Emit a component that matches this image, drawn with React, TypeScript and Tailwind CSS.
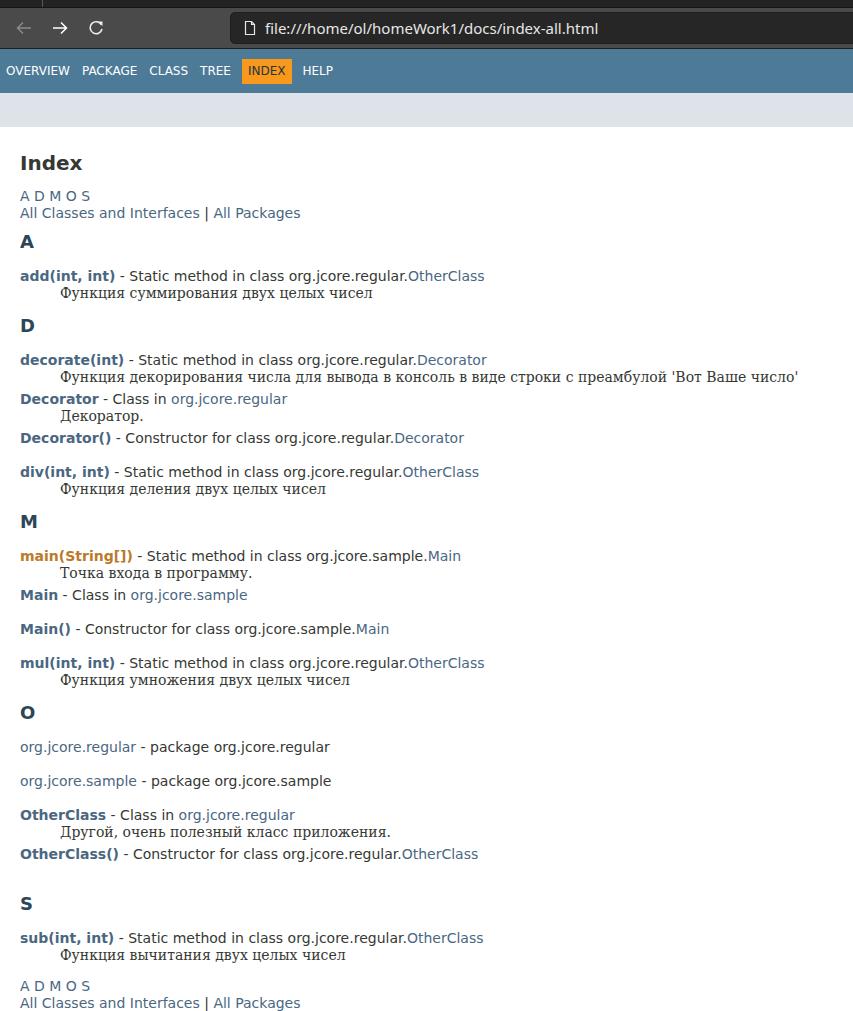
import React from "react";

const sans = "font-['DejaVu_Sans',_'Liberation_Sans',_sans-serif]";
const serif = "font-['DejaVu_Serif',_'Liberation_Serif',_serif]";

type Entry = {
  name: string;
  text: string;
  link?: string;
  desc?: string;
  lead?: "pkg";
  hot?: boolean;
};

const sections: { letter: string; extra?: string; items: Entry[] }[] = [
  {
    letter: "A",
    items: [
      {
        name: "add(int, int)",
        text: " - Static method in class org.jcore.regular.",
        link: "OtherClass",
        desc: "Функция суммирования двух целых чисел",
      },
    ],
  },
  {
    letter: "D",
    items: [
      {
        name: "decorate(int)",
        text: " - Static method in class org.jcore.regular.",
        link: "Decorator",
        desc: "Функция декорирования числа для вывода в консоль в виде строки с преамбулой 'Вот Ваше число'",
      },
      { name: "Decorator", text: " - Class in ", link: "org.jcore.regular", desc: "Декоратор." },
      { name: "Decorator()", text: " - Constructor for class org.jcore.regular.", link: "Decorator" },
      {
        name: "div(int, int)",
        text: " - Static method in class org.jcore.regular.",
        link: "OtherClass",
        desc: "Функция деления двух целых чисел",
      },
    ],
  },
  {
    letter: "M",
    items: [
      {
        name: "main(String[])",
        text: " - Static method in class org.jcore.sample.",
        link: "Main",
        desc: "Точка входа в программу.",
        hot: true,
      },
      { name: "Main", text: " - Class in ", link: "org.jcore.sample" },
      { name: "Main()", text: " - Constructor for class org.jcore.sample.", link: "Main" },
      {
        name: "mul(int, int)",
        text: " - Static method in class org.jcore.regular.",
        link: "OtherClass",
        desc: "Функция умножения двух целых чисел",
      },
    ],
  },
  {
    letter: "O",
    items: [
      { name: "org.jcore.regular", text: " - package org.jcore.regular", lead: "pkg" },
      { name: "org.jcore.sample", text: " - package org.jcore.sample", lead: "pkg" },
      {
        name: "OtherClass",
        text: " - Class in ",
        link: "org.jcore.regular",
        desc: "Другой, очень полезный класс приложения.",
      },
      { name: "OtherClass()", text: " - Constructor for class org.jcore.regular.", link: "OtherClass" },
    ],
  },
  {
    letter: "S",
    extra: "mt-[10px]",
    items: [
      {
        name: "sub(int, int)",
        text: " - Static method in class org.jcore.regular.",
        link: "OtherClass",
        desc: "Функция вычитания двух целых чисел",
      },
    ],
  },
];

const LetterBar = () => (
  <div className="leading-[17px]">
    <div className="text-[#4a6782]">A D M O S</div>
    <div>
      <span className="text-[#4a6782]">All Classes and Interfaces</span> |{" "}
      <span className="text-[#4a6782]">All Packages</span>
    </div>
  </div>
);

const Row = ({ e }: { e: Entry }) => (
  <div>
    <div className="h-[17px] leading-[17px] whitespace-nowrap">
      {e.lead === "pkg" ? (
        <span className="text-[#4a6782]">{e.name}</span>
      ) : (
        <span className={e.hot ? "font-bold text-[#bb7a2a]" : "font-bold text-[#4a6782]"}>{e.name}</span>
      )}
      {e.text}
      {e.link && <span className="text-[#4a6782]">{e.link}</span>}
    </div>
    {e.desc ? (
      <div className={`${serif} ml-10 mb-[5px] h-[17px] leading-[17px] whitespace-nowrap`}>{e.desc}</div>
    ) : (
      <div className="h-[17px]" />
    )}
  </div>
);

export default function App() {
  return (
    <div className={`${sans} w-[853px] h-[1011px] overflow-hidden bg-white text-[14px] text-[#353833]`}>
      {/* browser chrome */}
      <div className="h-[7px] bg-[#232323] flex">
        <div className="ml-[42px] w-px bg-[#555]" />
      </div>
      <div className="h-px bg-[#151515]" />
      <div className="h-[40px] bg-[#4a4a4a] flex items-center pl-[14px] font-['Noto_Sans',_sans-serif]">
        <svg width="20" height="20" viewBox="0 0 20 20" className="text-[#8a8a8a]">
          <path d="M17 10H4M9 4.5L3.5 10 9 15.5" fill="none" stroke="currentColor" strokeWidth="1.5" />
        </svg>
        <svg width="20" height="20" viewBox="0 0 20 20" className="ml-[16px] text-white">
          <path d="M3 10h13M11 4.5l5.5 5.5-5.5 5.5" fill="none" stroke="currentColor" strokeWidth="1.5" />
        </svg>
        <svg width="20" height="20" viewBox="0 0 20 20" className="ml-[16px] text-[#eee]">
          <path d="M15.5 7A6 6 0 1 0 16 11" fill="none" stroke="currentColor" strokeWidth="1.6" />
          <path d="M12 3.5h4.5V8z" fill="currentColor" />
        </svg>
        <div className="ml-[124px] h-[32px] flex-1 -mr-[10px] rounded-[5px] bg-[#262626] border border-[#1e1e1e] flex items-center pl-[11px]">
          <svg width="16" height="16" viewBox="0 0 16 16" className="text-[#e8e8e8]">
            <path d="M3.5 1.5h6l3 3v10h-9z M9.5 1.5v3h3" fill="none" stroke="currentColor" strokeWidth="1.2" />
          </svg>
          <span className="ml-[7px] text-[15px] text-[#e6e6e6]">
            file:///home/ol/homeWork1/docs/index-all.html
          </span>
        </div>
      </div>
      <div className="h-px bg-[#1e1e1e]" />

      {/* javadoc nav */}
      <div className="h-[44px] bg-[#4d7a97] pt-[10px] pl-0">
        <ul className="flex text-[12px] leading-[15px] text-white">
          {["Overview", "Package", "Class", "Tree", "Index", "Help"].map((n) => (
            <li
              key={n}
              className={
                n === "Index"
                  ? "uppercase px-[6px] py-[5px] bg-[#f8981d] text-[#253441] mx-[5px]"
                  : "uppercase px-[6px] py-[5px]"
              }
            >
              {n}
            </li>
          ))}
        </ul>
      </div>
      <div className="h-[34px] bg-[#dee3e9]" />

      {/* content */}
      <div className="px-5 pt-[24px]">
        <h1 className="text-[20px] leading-[24px] font-bold text-[#353833]">Index</h1>
        <div className="mt-[13px]">
          <LetterBar />
        </div>
        {sections.map((s, i) => (
          <div key={s.letter} className={s.extra}>
            <h2
              className={`${i === 0 ? "mt-[9px]" : "mt-[13.5px]"} mb-[14.5px] text-[18px] leading-[22px] font-bold text-[#2c4557]`}
            >
              {s.letter}
            </h2>
            {s.items.map((e) => (
              <Row key={e.name} e={e} />
            ))}
          </div>
        ))}
        <div className="mt-[14px]">
          <LetterBar />
        </div>
      </div>
    </div>
  );
}
